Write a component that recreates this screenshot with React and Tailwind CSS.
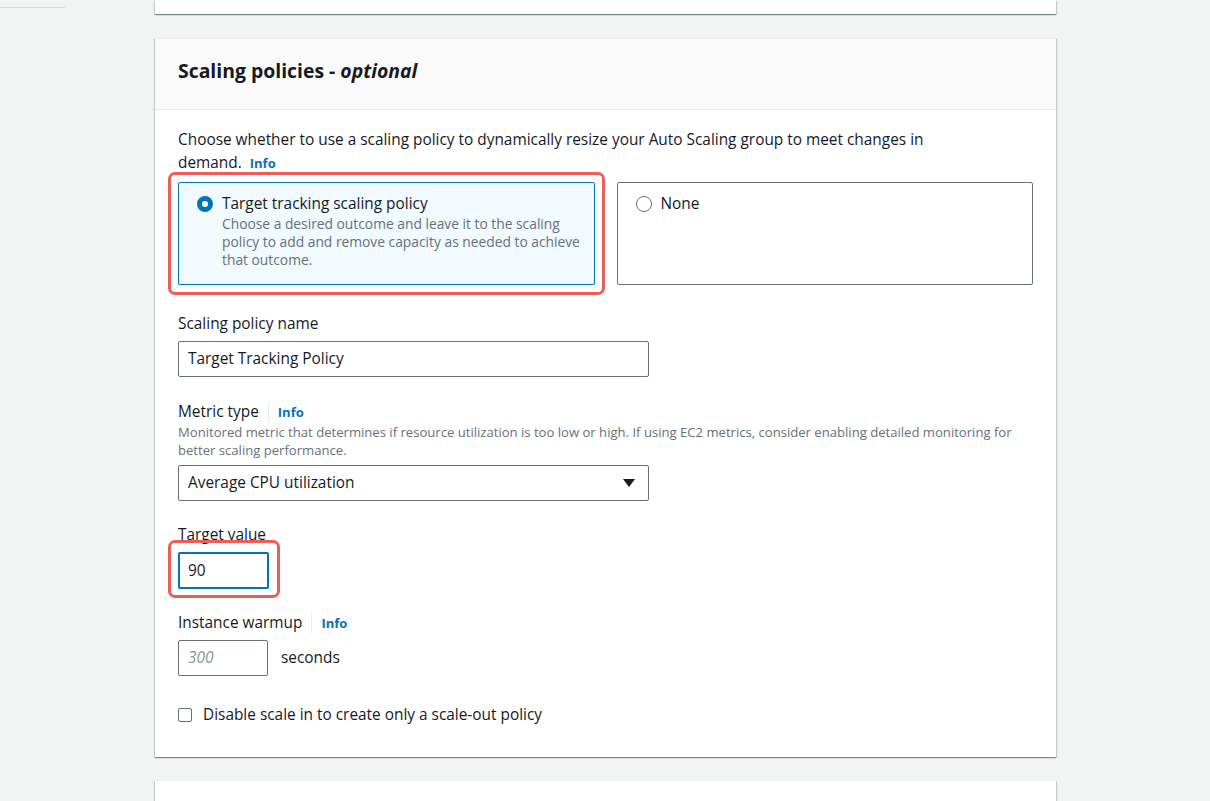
import React from "react";

const card =
  "bg-white border-t border-[#eaeded] shadow-[0_1px_1px_0_rgba(0,28,36,0.3),1px_1px_1px_0_rgba(0,28,36,0.15),-1px_1px_1px_0_rgba(0,28,36,0.15)]";

function Info() {
  return <span className="text-[13px] font-bold text-[#0073bb]">Info</span>;
}

function LabelWithInfo({ children }) {
  return (
    <div className="flex items-center h-[22px] text-[15.4px] leading-[22px] text-[#16191f]">
      <span>{children}</span>
      <span className="ml-[9px] mr-[9px] h-[20px] border-l border-[#eaeded]" />
      <Info />
    </div>
  );
}

export default function App() {
  return (
    <div
      className="min-h-[801px] w-[1210px] bg-[#f2f3f3] flex text-[#16191f] overflow-hidden"
      style={{ fontFamily: '"Open Sans", "Noto Sans", Arial, sans-serif' }}
    >
      <div className="w-[155px] shrink-0">
        <div className="mt-[7px] w-[65px] h-px bg-[#d5dbdb]" />
      </div>
      <div className="w-[901px] shrink-0 flex flex-col">
        <div className="h-[14px] bg-white shadow-[0_1px_1px_0_rgba(0,28,36,0.3),1px_1px_1px_0_rgba(0,28,36,0.15),-1px_1px_1px_0_rgba(0,28,36,0.15)]" />

        <div className={`mt-[24px] ${card}`}>
          <div className="h-[71px] bg-[#fafafa] border-b border-[#eaeded] px-[23px] flex items-center">
            <h2 className="text-[19.4px] font-bold leading-[26px] mt-[-6px]">
              Scaling policies - <i>optional</i>
            </h2>
          </div>

          <div className="px-[23px] pt-[18px] pb-[31px]">
            <p className="text-[15.4px] leading-[23px] pr-[100px]">
              Choose whether to use a scaling policy to dynamically resize your Auto Scaling group to meet changes in
              demand.{" "}
              <span className="ml-[4px]">
                <Info />
              </span>
            </p>

            <div className="mt-[7px] grid grid-cols-2 gap-[22px]">
              <div className="relative">
                <div className="h-[103px] border border-[#0073bb] bg-[#f1faff] rounded-[2px] pl-[18px] pr-[10px] pt-[10px] flex gap-[9px]">
                  <span className="mt-[3px] w-[16px] h-[16px] rounded-full border-[5px] border-[#0073bb] bg-white shrink-0" />
                  <div>
                    <div className="text-[15.4px] leading-[22px]">Target tracking scaling policy</div>
                    <div className="text-[13.8px] leading-[18px] text-[#687078]">
                      Choose a desired outcome and leave it to the scaling policy to add and remove capacity as needed
                      to achieve that outcome.
                    </div>
                  </div>
                </div>
                <div className="absolute -inset-[10px] border-[3px] border-[#ec5f58] rounded-[7px] pointer-events-none" />
              </div>
              <div className="h-[103px] border border-[#687078] bg-white rounded-[2px] pl-[18px] pt-[10px] flex gap-[9px]">
                <span className="mt-[3px] w-[16px] h-[16px] rounded-full border-[1.5px] border-[#687078] bg-white shrink-0" />
                <div className="text-[15.4px] leading-[22px]">None</div>
              </div>
            </div>

            <div className="mt-[28px] text-[15.4px] leading-[22px]">Scaling policy name</div>
            <div className="mt-[6px] w-[471px] h-[36px] border border-[#687078] rounded-[2px] pl-[9px] flex items-center text-[15.4px]">
              Target Tracking Policy
            </div>

            <div className="mt-[24px]">
              <LabelWithInfo>Metric type</LabelWithInfo>
            </div>
            <div className="text-[13.1px] leading-[18px] text-[#687078]">
              Monitored metric that determines if resource utilization is too low or high. If using EC2 metrics,
              consider enabling detailed monitoring for better scaling performance.
            </div>
            <div className="mt-[6px] w-[471px] h-[36px] border border-[#687078] rounded-[2px] pl-[9px] pr-[12px] flex items-center justify-between text-[15.4px]">
              <span>Average CPU utilization</span>
              <svg width="14" height="10" viewBox="0 0 14 10">
                <path d="M1 1 L13 1 L7 9 Z" fill="#16191f" />
              </svg>
            </div>

            <div className="mt-[23px] text-[15.4px] leading-[22px]">Target value</div>
            <div className="mt-[6px] relative w-[91px]">
              <div className="h-[37px] border-2 border-[#0073bb] rounded-[2px] pl-[8px] flex items-center text-[15.4px]">
                90
              </div>
              <div className="absolute left-[-10px] right-[-11px] top-[-12px] bottom-[-9px] border-[3px] border-[#ec5f58] rounded-[7px] pointer-events-none" />
            </div>

            <div className="mt-[23px]">
              <LabelWithInfo>Instance warmup</LabelWithInfo>
            </div>
            <div className="mt-[6px] flex items-center">
              <div className="w-[90px] h-[36px] border border-[#687078] rounded-[2px] pl-[9px] flex items-center text-[15.4px] italic text-[#879596]">
                300
              </div>
              <span className="ml-[13px] text-[15.4px]">seconds</span>
            </div>

            <div className="mt-[28px] flex items-center h-[22px]">
              <span className="w-[14px] h-[14px] border border-[#687078] rounded-[2px] bg-white" />
              <span className="ml-[11px] text-[15.4px] leading-[22px]">Disable scale in to create only a scale-out policy</span>
            </div>
          </div>
        </div>

        <div className={`mt-[23px] h-[40px] ${card} bg-[#fafafa]`} />
      </div>
    </div>
  );
}
